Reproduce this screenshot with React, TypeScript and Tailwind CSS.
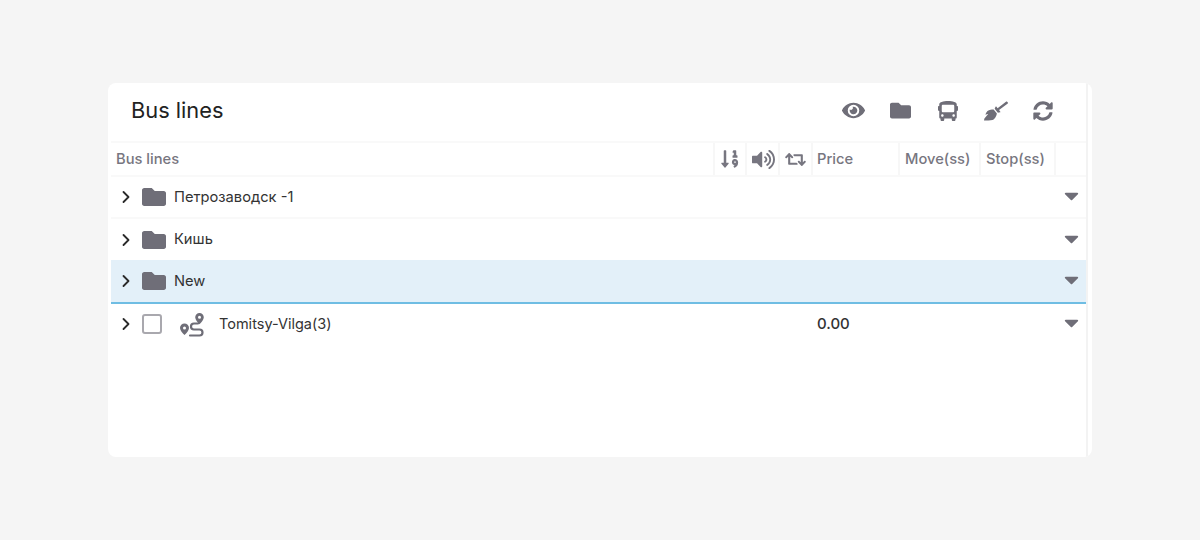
import { FaEye, FaFolder, FaBus, FaBroom, FaSyncAlt, FaSortNumericDown, FaVolumeUp, FaRetweet, FaCaretDown } from "react-icons/fa";
import { LuChevronRight } from "react-icons/lu";

const Chevron = () => (
  <span className="w-[30px] flex justify-center text-[#2a2a2a]">
    <LuChevronRight size={20} strokeWidth={2.2} />
  </span>
);

const Caret = () => <FaCaretDown size={23} className="text-[#6f6e78]" />;

const RouteIcon = () => (
  <svg width="26" height="26" viewBox="0 0 26 26" className="text-[#6f6e78] ml-[16px] shrink-0">
    <path fillRule="evenodd" fill="currentColor" d="M21.5 2a4.3 4.3 0 0 1 4.3 4.3c0 2.4-2.4 5-4.3 7-1.9-2-4.3-4.6-4.3-7A4.3 4.3 0 0 1 21.5 2zm0 2.8a1.5 1.5 0 1 0 0 3 1.5 1.5 0 0 0 0-3z" />
    <path fillRule="evenodd" fill="currentColor" d="M6.5 12.5a4.5 4.5 0 0 1 4.5 4.5c0 2.5-2.5 5-4.5 7-2-2-4.5-4.5-4.5-7a4.5 4.5 0 0 1 4.5-4.5zm0 3a1.5 1.5 0 1 0 0 3 1.5 1.5 0 0 0 0-3z" />
    <path d="M20 12.5h-4a3 3 0 0 0 0 6h5.5a3 3 0 0 1 0 6H12" fill="none" stroke="currentColor" strokeWidth="2.2" strokeLinecap="round" />
  </svg>
);

function FolderRow({ name, variant }: { name: string; variant: "first" | "second" | "selected" }) {
  const rowClass =
    variant === "selected"
      ? "h-[44px] flex items-center bg-[#e3f0f9] border-b-2 border-[#6fbde3]"
      : variant === "second"
        ? "h-[41px] flex items-center"
        : "h-[42px] flex items-center border-b-2 border-[#f9f9f9]";
  return (
    <div className={rowClass}>
      <Chevron />
      <FaFolder size={24} className="text-[#6f6e78] ml-[1px]" />
      <span className="ml-[8px] text-[14.7px] text-[#333]">{name}</span>
      <span className="ml-auto mr-[3px] flex -mt-[3px]"><Caret /></span>
    </div>
  );
}

const HeaderIcon = ({ className, children }: { className: string; children: React.ReactNode }) => (
  <span className={className}>{children}</span>
);

export default function App() {
  return (
    <div className="w-[1200px] h-[540px] bg-[#f5f5f5] pt-[83px] pl-[108px] font-['Inter',sans-serif]">
      <div className="w-[984px] h-[374px] bg-white rounded-lg pl-[3px] pr-[6px] relative overflow-hidden">
        <div className="absolute top-0 right-0 bottom-0 w-[6px] border-l-2 border-[#f3f3f3] rounded-br-lg" />
        <div className="h-[60px] flex items-center pl-5 pr-[21px] pb-[3px] border-b-2 border-[#f9f9f9]">
          <h1 className="text-[21.8px] text-[#222] font-normal">Bus lines</h1>
          <div className="ml-auto flex items-center text-[#6f6e78]">
            <HeaderIcon className="w-[47px] flex justify-center"><FaEye size={23} /></HeaderIcon>
            <HeaderIcon className="w-[47px] flex justify-center"><FaFolder size={21} /></HeaderIcon>
            <HeaderIcon className="w-[48px] flex justify-center"><FaBus size={20} /></HeaderIcon>
            <HeaderIcon className="w-[48px] flex justify-center"><FaBroom size={24} /></HeaderIcon>
            <HeaderIcon className="w-[45px] flex justify-center"><FaSyncAlt size={20} /></HeaderIcon>
          </div>
        </div>
        <div className="h-[34px] flex items-stretch border-b-2 border-[#f9f9f9] text-[14.7px] font-medium text-[#777680]">
          <div className="w-[602px] pl-[5px] flex items-center">Bus lines</div>
          <div className="w-[32px] border-l-2 border-[#f7f7f7] flex items-center justify-center"><FaSortNumericDown size={20} /></div>
          <div className="w-[33px] border-l-2 border-[#f7f7f7] pl-[1px] flex items-center justify-center"><FaVolumeUp size={23} /></div>
          <div className="w-[33px] border-l-2 border-[#f7f7f7] flex items-center justify-center"><FaRetweet size={21} /></div>
          <div className="w-[87px] border-l-2 border-[#f7f7f7] pl-[4px] flex items-center">Price</div>
          <div className="w-[81px] border-l-2 border-[#f7f7f7] pl-[5px] flex items-center">Move(ss)</div>
          <div className="w-[75px] border-l-2 border-[#f7f7f7] pl-[5px] flex items-center">Stop(ss)</div>
          <div className="flex-1 border-l-2 border-[#f7f7f7]" />
        </div>
        <FolderRow name="Петрозаводск -1" variant="first" />
        <FolderRow name="Кишь" variant="second" />
        <FolderRow name="New" variant="selected" />
        <div className="h-[40px] flex items-center">
          <Chevron />
          <span className="w-[20px] h-[20px] ml-[1px] rounded-[3px] border-2 border-[#a9a8ae] bg-white" />
          <RouteIcon />
          <span className="ml-[15px] text-[14.5px] text-[#333]">Tomitsy-Vilga(3)</span>
          <span className="absolute left-[709px] text-[15px] font-medium text-[#333]">0.00</span>
          <span className="ml-auto mr-[3px] flex -mt-[4px]"><Caret /></span>
        </div>
      </div>
    </div>
  );
}
